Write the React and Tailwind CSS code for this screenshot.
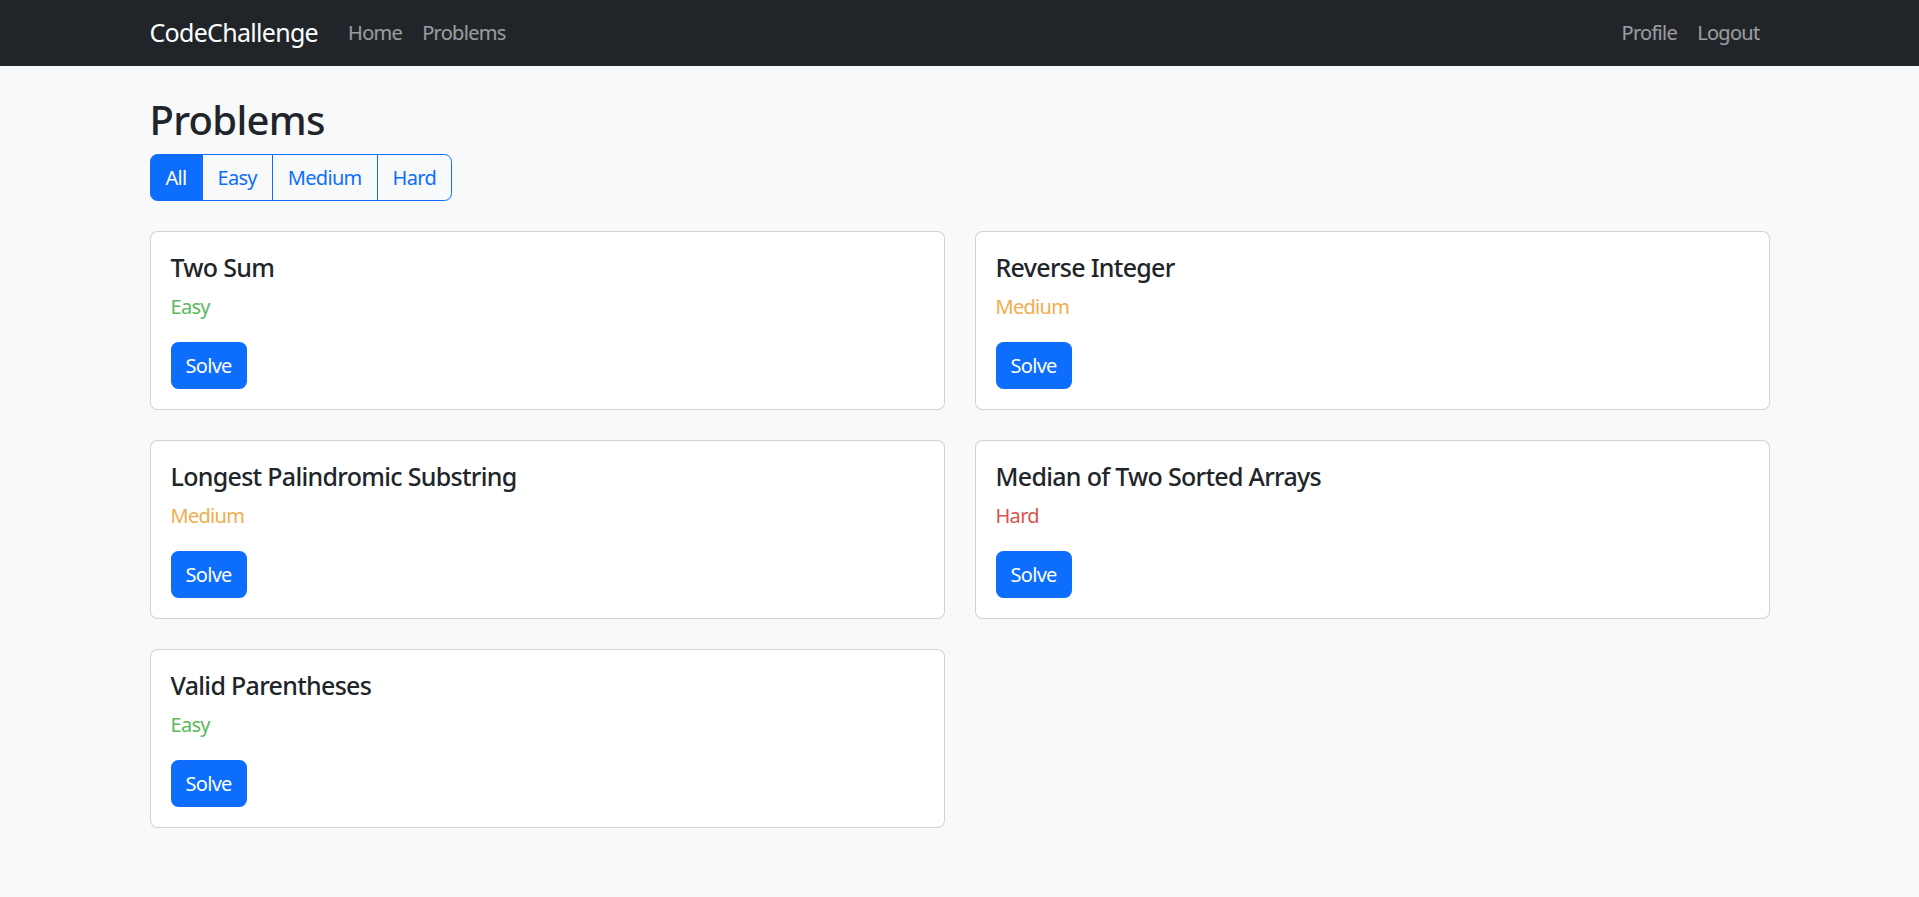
import { useState } from 'react';

const problems = [
    { id: 1, title: 'Two Sum', difficulty: 'Easy' },
    { id: 2, title: 'Reverse Integer', difficulty: 'Medium' },
    { id: 3, title: 'Longest Palindromic Substring', difficulty: 'Medium' },
    { id: 4, title: 'Median of Two Sorted Arrays', difficulty: 'Hard' },
    { id: 5, title: 'Valid Parentheses', difficulty: 'Easy' },
];

const difficultyColor = {
    Easy: 'text-[#5cb85c]',
    Medium: 'text-[#f0ad4e]',
    Hard: 'text-[#d9534f]',
};

const filters = ['All', 'Easy', 'Medium', 'Hard'];

export default function App() {
    const [filter, setFilter] = useState('All');

    const visible = problems.filter((p) => filter === 'All' || p.difficulty === filter);

    return (
        <div className="min-h-[897px] bg-[#f8f9fa] text-[#212529] font-['Noto_Sans',sans-serif] tracking-[-0.035em] text-[20px] leading-[1.5]">
            {/* Navbar */}
            <nav className="h-[66px] bg-[#212529] flex items-center">
                <div className="w-[1620px] mx-auto flex items-center justify-between">
                    <div className="flex items-center">
                        <a href="#" className="text-white text-[25px] mr-[20px]">CodeChallenge</a>
                        <a href="#" className="text-white/55 px-[10px]">Home</a>
                        <a href="#" className="text-white/55 px-[10px]">Problems</a>
                    </div>
                    <div className="flex items-center">
                        <a href="#" className="text-white/55 px-[10px]">Profile</a>
                        <a href="#" className="text-white/55 px-[10px]">Logout</a>
                    </div>
                </div>
            </nav>

            {/* Content */}
            <div className="w-[1620px] mx-auto pt-[30px]">
                <h1 className="text-[40px] font-medium leading-[1.2] mb-[10px]">Problems</h1>

                <div className="inline-flex mb-[30px]">
                    {filters.map((f, i) => (
                        <button
                            key={f}
                            onClick={() => setFilter(f)}
                            className={
                                'h-[47px] px-[15px] border border-[#0d6efd] ' +
                                (i > 0 ? '-ml-px ' : '') +
                                (i === 0 ? 'rounded-l-[7.5px] ' : '') +
                                (i === filters.length - 1 ? 'rounded-r-[7.5px] ' : '') +
                                (filter === f ? 'bg-[#0d6efd] text-white' : 'bg-transparent text-[#0d6efd]')
                            }
                        >
                            {f}
                        </button>
                    ))}
                </div>

                <div className="grid grid-cols-2 gap-x-[30px] gap-y-[30px]">
                    {visible.map((p) => (
                        <div key={p.id} className="bg-white border border-black/[0.175] rounded-[7.5px] p-[20px]">
                            <h5 className="text-[25px] font-medium leading-[1.2] mb-[10px]">{p.title}</h5>
                            <p className={'mb-[20px] ' + difficultyColor[p.difficulty]}>{p.difficulty}</p>
                            <button className="h-[47px] px-[15px] rounded-[7.5px] bg-[#0d6efd] text-white">Solve</button>
                        </div>
                    ))}
                </div>
            </div>
        </div>
    );
}
